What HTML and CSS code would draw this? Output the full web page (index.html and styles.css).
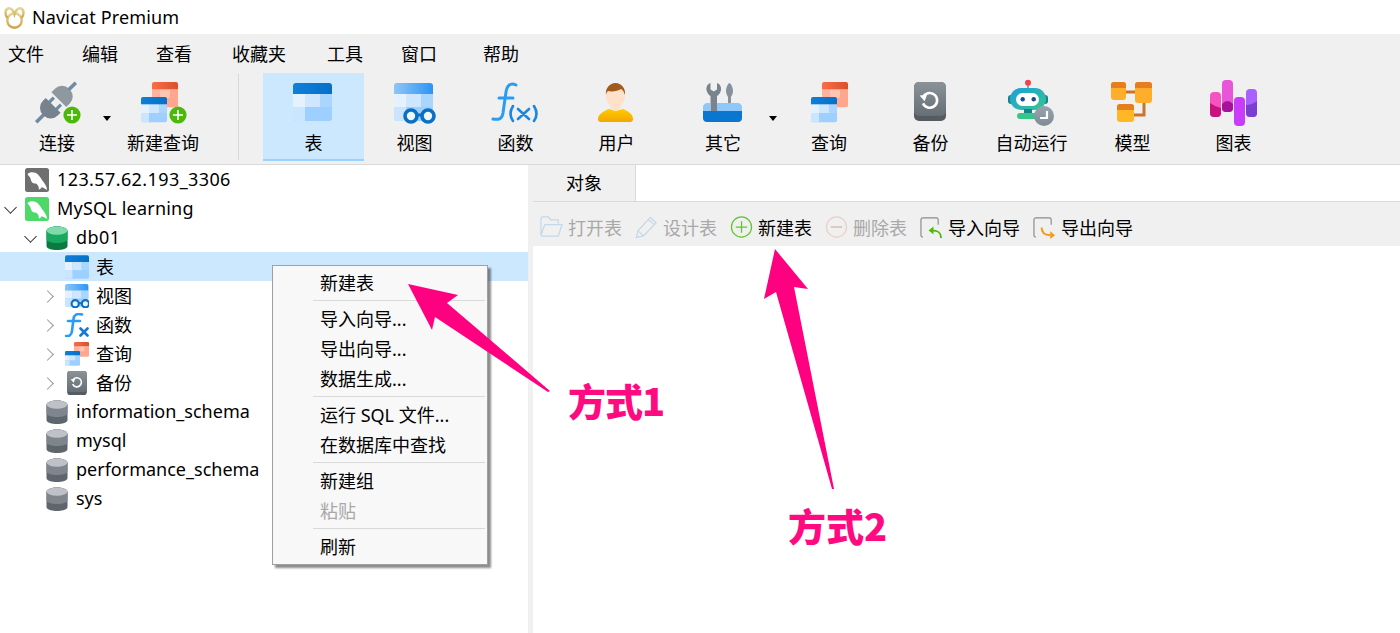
FILE: index.html
```html
<!DOCTYPE html>
<html lang="zh-CN">
<head>
    <meta charset="UTF-8">
    <title>Navicat Premium</title>
    <link rel="stylesheet" href="styles.css">
</head>
<body>

<!-- shared icon parts -->
<svg class="defs" width="0" height="0">
    <defs>
        <linearGradient id="gHead" x1="0" y1="0" x2="1" y2="0"><stop offset="0" stop-color="#0f7fd8"/><stop offset="1" stop-color="#0570c8"/></linearGradient>
        <linearGradient id="gHeadLight" x1="0" y1="0" x2="1" y2="0"><stop offset="0" stop-color="#8ec6f8"/><stop offset="1" stop-color="#2b95f3"/></linearGradient>
        <linearGradient id="gHeadRed" x1="0" y1="0" x2="1" y2="0"><stop offset="0" stop-color="#fb6d48"/><stop offset="1" stop-color="#d9502c"/></linearGradient>
        <linearGradient id="gGrey" x1="0" y1="0" x2="0" y2="1"><stop offset="0" stop-color="#8b9399"/><stop offset="1" stop-color="#666e76"/></linearGradient>
        <linearGradient id="gBody" x1="0" y1="0" x2="0" y2="1"><stop offset="0" stop-color="#ffcb00"/><stop offset="1" stop-color="#f3a600"/></linearGradient>
        <linearGradient id="gRobot" x1="0" y1="0" x2="1" y2="1"><stop offset="0" stop-color="#1c9fdc"/><stop offset="1" stop-color="#36c68c"/></linearGradient>
        <linearGradient id="gBadge" x1="0" y1="0" x2="0" y2="1"><stop offset="0" stop-color="#98a3ad"/><stop offset="1" stop-color="#7f8b97"/></linearGradient>
        <linearGradient id="gLogo" x1="0" y1="0" x2="0" y2="1"><stop offset="0" stop-color="#e6d596"/><stop offset="1" stop-color="#cfa544"/></linearGradient>

        <g id="tblCells">
            <path d="M4 16h39v24a3 3 0 0 1-3 3H7a3 3 0 0 1-3-3z" fill="#9dd0ff"/>
            <rect x="4" y="16" width="12" height="13" fill="#e4f1ff"/>
            <rect x="16" y="16" width="15" height="13" fill="#cfe6ff"/>
            <rect x="31" y="16" width="12" height="13" fill="#a9d6ff"/>
            <path d="M4 29h12v14H7a3 3 0 0 1-3-3z" fill="#cbe5ff"/>
        </g>
        <g id="tbl">
            <use href="#tblCells"/>
            <path d="M4 16V8a3 3 0 0 1 3-3h33a3 3 0 0 1 3 3v8z" fill="url(#gHead)"/>
        </g>
        <g id="tblRed">
            <path d="M4 16h39v24a3 3 0 0 1-3 3H7a3 3 0 0 1-3-3z" fill="#ffa78e"/>
            <rect x="16" y="16" width="15" height="13" fill="#ffc4b2"/>
            <rect x="4" y="16" width="12" height="13" fill="#ffb29c"/>
            <path d="M4 16V8a3 3 0 0 1 3-3h33a3 3 0 0 1 3 3v8z" fill="url(#gHeadRed)"/>
        </g>
        <g id="view">
            <use href="#tblCells"/>
            <path d="M4 16V8a3 3 0 0 1 3-3h33a3 3 0 0 1 3 3v8z" fill="url(#gHeadLight)"/>
            <circle cx="21" cy="38" r="6" fill="#eef6ff" stroke="#0a70c4" stroke-width="3.6"/>
            <circle cx="38" cy="38" r="6" fill="#eef6ff" stroke="#0a70c4" stroke-width="3.6"/>
            <path d="M26 37h7" stroke="#0a70c4" stroke-width="3"/>
        </g>
        <g id="query">
            <use href="#tblRed" transform="translate(14.33 .67) scale(.667)"/>
            <use href="#tbl" transform="translate(3.33 15.67) scale(.667)"/>
        </g>
        <g id="backup">
            <rect x="8" y="4" width="32" height="39" rx="5" fill="#555b60"/>
            <rect x="8" y="4" width="32" height="34" rx="5" fill="url(#gGrey)"/>
            <path d="M17.6 18.2a7.4 7.4 0 1 1-.6 7.2" fill="none" stroke="#fff" stroke-width="2.6"/>
            <path d="M13.6 17.6l7.4-.8-2.4 6.4z" fill="#fff"/>
        </g>
        <g id="plus">
            <circle cx="39" cy="37" r="8.6" fill="#4cb80a"/>
            <path d="M39 32v10M34 37h10" stroke="#fff" stroke-width="1.6"/>
        </g>
        <g id="dolphin">
            <path d="M2.5 6C5 3.500 10 3.500 13 6.500c2.500 2.500 3.500 5 5.500 7.500 2 2.500 3.500 5.500 3.500 8-2-1.500-4-2.500-5.500-2.800-.5 1.300-1.300 2-2.700 2.300.4-2.500-.6-4.500-2.800-6-1.800.4-3.500-.4-4.500-2-.8-1.500-.8-3.500-2-4.800C3.800 7.800 3 7 2.500 6z" fill="#fff"/>
        </g>
        <g id="dbGreen">
            <path d="M0 5c0-6 21-6 21 0v15c0 5.300-21 5.300-21 0z" fill="#0a7a40"/>
            <path d="M0 5c0-6 21-6 21 0v8c0 5.300-21 5.300-21 0z" fill="#18a860"/>
            <ellipse cx="10.5" cy="4.6" rx="10.5" ry="4.200" fill="#7ddcaa"/>
        </g>
        <g id="dbGrey">
            <path d="M0 5c0-6 21-6 21 0v15c0 5.300-21 5.300-21 0z" fill="#5f656c"/>
            <path d="M0 5c0-6 21-6 21 0v8c0 5.300-21 5.300-21 0z" fill="#7e858d"/>
            <ellipse cx="10.5" cy="4.6" rx="10.5" ry="4.200" fill="#bec2c8"/>
        </g>
    </defs>
</svg>

<header class="titlebar">
    <svg class="logo" viewBox="0 0 21 22">
        <g fill="none" stroke="url(#gLogo)" stroke-width="2.4">
            <circle cx="10.5" cy="13.5" r="7.2"/>
            <path d="M3.500 11C.5 7.500 1 2.500 4 1.500c3-1 5.500 2 6.500 5.500 1-3.500 3.500-6.500 6.500-5.500 3 1 3.500 6 .5 9.500"/>
        </g>
    </svg>
    <span class="title-text">Navicat Premium</span>
</header>

<nav class="menubar">
    <span>文件</span><span>编辑</span><span>查看</span><span>收藏夹</span><span>工具</span><span>窗口</span><span>帮助</span>
</nav>

<div class="toolbar">
    <div class="tool tool-drop tool-first">
        <svg viewBox="0 0 48 48">
            <g transform="rotate(-45 23 24.500)">
                <path d="M-5 24.500H6" stroke="#6f8ba3" stroke-width="3.600"/>
                <path d="M5 14h4a10 10 0 0 1 10 10v1a10 10 0 0 1-10 10H5z" transform="matrix(-1 0 0 1 24 0)" fill="#78828c"/>
                <path d="M18 19.500h7M18 29.500h7" stroke="#6f8ba3" stroke-width="3.200"/>
                <path d="M27 14h5a10 10 0 0 1 10 10v1a10 10 0 0 1-10 10h-5z" fill="#8f989f"/>
                <path d="M41 24.500h10" stroke="#6f8ba3" stroke-width="3.600"/>
            </g>
            <use href="#plus"/>
        </svg>
        <span>连接</span>
    </div>
    <div class="caret"><i></i></div>
    <div class="tool tool-wide">
        <svg viewBox="0 0 48 48">
            <use href="#query" transform="translate(-4 0)"/>
            <use href="#plus"/>
        </svg>
        <span>新建查询</span>
    </div>
    <div class="tool-sep"></div>
    <div class="tool active">
        <svg viewBox="0 0 48 48"><use href="#tbl"/></svg>
        <span>表</span>
    </div>
    <div class="tool">
        <svg viewBox="0 0 48 48"><use href="#view"/></svg>
        <span>视图</span>
    </div>
    <div class="tool">
        <svg viewBox="0 0 48 48">
            <g fill="none" stroke="#2b9cf5" stroke-width="3" stroke-linecap="round">
                <path d="M25 7c-6-3-9 1-10 7l-3 21c-1 6-4 7-10 6"/>
                <path d="M8 20h14"/>
            </g>
            <g fill="none" stroke="#1a86e0" stroke-width="2.600" stroke-linecap="round">
                <path d="M22 28q-5 8 0 15M43 28q5 8 0 15M27 31l11 10M38 31L27 41"/>
            </g>
        </svg>
        <span>函数</span>
    </div>
    <div class="tool">
        <svg viewBox="0 0 48 48">
            <path d="M6 41c0-5 6-8 11-10l7 2 7-2c5 2 10 5 10 10 0 2-1 3-3 3H9c-2 0-3-1-3-3z" fill="url(#gBody)"/>
            <path d="M17 26c-3-3-3-7-3-10 0-7 4-11 9.500-11S33 9 33 16c0 3 0 7-3 10-2 5-4 7-6.500 7s-4.500-2-6.500-7z" fill="#ffe0c8"/>
            <path d="M14 17c-1-7 4-12 9.500-12S34 10 33 17c-1-3-2-5-4-6-3 2-9 3-13 2-1 1-2 2-2 4z" fill="#a05a1c"/>
        </svg>
        <span>用户</span>
    </div>
    <div class="tool tool-drop tool-other">
        <svg viewBox="0 0 48 48">
            <path d="M11.500 5c-3 1-4.500 4-4 7 .4 2.500 2 5 4 6v15H18V18c2-1 3.600-3.500 4-6 .5-3-1-6-4-7v6.500l-3.200 2-3.300-2z" fill="#78838d"/>
            <path d="M30.500 5c2 1 3.500 5 3.500 8s-1.500 5-2 6v10h-3V19c-.5-1-2-3-2-6s1.500-7 3.500-8z" fill="#86919b"/>
            <ellipse cx="30.500" cy="30" rx="4.500" ry="3" fill="#78838d"/>
            <path d="M8 25h3.500v8H18v-8h21c2 0 4 2 4 4v4H4v-4c0-2 2-4 4-4z" fill="#8ec8fa"/>
            <path d="M4 33h39v7c0 2.500-1.500 4-4 4H8c-2.500 0-4-1.500-4-4z" fill="#0a76d0"/>
        </svg>
        <span>其它</span>
    </div>
    <div class="caret"><i></i></div>
    <div class="tool tool-wide tool-query">
        <svg viewBox="0 0 48 48"><use href="#query"/></svg>
        <span>查询</span>
    </div>
    <div class="tool">
        <svg viewBox="0 0 48 48"><use href="#backup"/></svg>
        <span>备份</span>
    </div>
    <div class="tool">
        <svg viewBox="0 0 48 48">
            <g transform="translate(1 0)">
                <path d="M20 6v5" stroke="#7d8a96" stroke-width="1.500"/>
                <circle cx="20" cy="4.700" r="3" fill="#f2404e"/>
                <rect x="0" y="17" width="40" height="9" rx="3" fill="#14838f"/>
                <rect x="2" y="10" width="36" height="22" rx="11" fill="url(#gRobot)"/>
                <rect x="8" y="15" width="23" height="13" rx="6.500" fill="#fff"/>
                <circle cx="14.700" cy="21.300" r="2.200" fill="#1d4a8a"/>
                <circle cx="25.700" cy="21.300" r="2.200" fill="#1d4a8a"/>
                <rect x="16" y="31" width="8" height="5" fill="#14838f"/>
                <rect x="9" y="35" width="21" height="6" rx="3" fill="#36c68c"/>
                <circle cx="36" cy="38" r="10" fill="url(#gBadge)"/>
                <path d="M39 33v7h-7" fill="none" stroke="#fff" stroke-width="2.200"/>
            </g>
        </svg>
        <span>自动运行</span>
    </div>
    <div class="tool">
        <svg viewBox="0 0 48 48">
            <path d="M18 14h9M36 25v12H26" fill="none" stroke="#c8752a" stroke-width="3"/>
            <rect x="3" y="4" width="15" height="18" rx="3" fill="#ffae2b"/>
            <path d="M3 10V7a3 3 0 0 1 3-3h9a3 3 0 0 1 3 3v3z" fill="#e67d20"/>
            <rect x="27" y="4" width="17" height="21" rx="3" fill="#ffae2b"/>
            <path d="M27 10V7a3 3 0 0 1 3-3h11a3 3 0 0 1 3 3v3z" fill="#e67d20"/>
            <rect x="9" y="26" width="17" height="18" rx="3" fill="#ffb724"/>
            <path d="M9 32v-3a3 3 0 0 1 3-3h11a3 3 0 0 1 3 3v3z" fill="#e67d20"/>
        </svg>
        <span>模型</span>
    </div>
    <div class="tool">
        <svg viewBox="0 0 48 48">
            <rect x="1" y="14" width="11" height="25" rx="4" fill="#f652c0"/>
            <path d="M1 25q5.500 4 11 5v5a4 4 0 0 1-4 4H5a4 4 0 0 1-4-4z" fill="#c8127e"/>
            <rect x="13" y="2" width="11" height="32" rx="4" fill="#e855d8"/>
            <path d="M13 26q5.500-6 11 0v4a4 4 0 0 1-4 4h-3a4 4 0 0 1-4-4z" fill="#a5129a"/>
            <rect x="25" y="19" width="11" height="29" rx="4" fill="#c83cfa"/>
            <rect x="37" y="11" width="11" height="28" rx="4" fill="#a860ff"/>
            <path d="M37 27q5.500 0 11-4v12a4 4 0 0 1-4 4h-3a4 4 0 0 1-4-4z" fill="#7a3fd0"/>
        </svg>
        <span>图表</span>
    </div>
</div>

<div class="main">
    <div class="tree">
        <div class="row">
            <i class="chev"></i>
            <svg class="ico" viewBox="0 0 24 24"><rect width="24" height="24" rx="2.500" fill="#6f6f6f"/><use href="#dolphin"/></svg>
            <span class="wide-digits">123.57.62.193_3306</span>
        </div>
        <div class="row">
            <i class="chev open"></i>
            <svg class="ico" viewBox="0 0 24 24"><rect width="24" height="24" rx="2.500" fill="#4fd86a"/><use href="#dolphin"/></svg>
            <span class="wide-name">MySQL learning</span>
        </div>
        <div class="row lvl1">
            <i class="chev open"></i>
            <svg class="ico" viewBox="-1.500 0 24 24"><use href="#dbGreen"/></svg>
            <span class="wide-digits">db01</span>
        </div>
        <div class="row lvl2 selected">
            <i class="chev"></i>
            <svg class="ico" viewBox="4 5 39 38"><use href="#tbl"/></svg>
            <span>表</span>
        </div>
        <div class="row lvl2">
            <i class="chev closed"></i>
            <svg class="ico" viewBox="4 5 40 40"><use href="#view"/></svg>
            <span>视图</span>
        </div>
        <div class="row lvl2">
            <i class="chev closed"></i>
            <svg class="ico" viewBox="0 0 24 24">
                <path d="M17 1.500C12 0 9 2 8.500 6L7 18c-.5 4-3 5.500-6 5M3 8h12" fill="none" stroke="#2b9cf5" stroke-width="2.600" stroke-linecap="round"/>
                <path d="M15.500 15.500l7 7M22.500 15.500l-7 7" stroke="#1a78d0" stroke-width="2.600" stroke-linecap="round"/>
            </svg>
            <span>函数</span>
        </div>
        <div class="row lvl2">
            <i class="chev closed"></i>
            <svg class="ico" viewBox="0 0 24 24"><use href="#tblRed" transform="translate(7.46 -1.92) scale(.385)"/><use href="#tbl" transform="translate(-1.54 7.07) scale(.385)"/></svg>
            <span>查询</span>
        </div>
        <div class="row lvl2">
            <i class="chev closed"></i>
            <svg class="ico" viewBox="5 4 38 39"><use href="#backup"/></svg>
            <span>备份</span>
        </div>
        <div class="row lvl1">
            <i class="chev"></i>
            <svg class="ico" viewBox="-1.500 0 24 24"><use href="#dbGrey"/></svg>
            <span>information_schema</span>
        </div>
        <div class="row lvl1">
            <i class="chev"></i>
            <svg class="ico" viewBox="-1.500 0 24 24"><use href="#dbGrey"/></svg>
            <span>mysql</span>
        </div>
        <div class="row lvl1">
            <i class="chev"></i>
            <svg class="ico" viewBox="-1.500 0 24 24"><use href="#dbGrey"/></svg>
            <span>performance_schema</span>
        </div>
        <div class="row lvl1">
            <i class="chev"></i>
            <svg class="ico" viewBox="-1.500 0 24 24"><use href="#dbGrey"/></svg>
            <span>sys</span>
        </div>
    </div>

    <div class="content">
        <div class="tabs"><div class="tab">对象</div></div>
        <div class="actions">
            <div class="action off">
                <svg viewBox="0 0 24 24" fill="none" stroke="#c4d8e8" stroke-width="1.300"><path d="M1 20V3a2 2 0 0 1 2-2h6l2 3h8v4M1 20l4-11h18l-4 12H2z"/></svg>
                <span>打开表</span>
            </div>
            <div class="action off">
                <svg viewBox="0 0 24 24" fill="none" stroke="#c4d8e8" stroke-width="1.300"><path d="M1.500 22.500l1.500-7L16 1.500l6 5.500L9 20.500zM3 15.500l6 5M14 4l6 5"/></svg>
                <span>设计表</span>
            </div>
            <div class="action">
                <svg viewBox="0 0 24 24" fill="none" stroke="#5fc52a" stroke-width="1.300"><circle cx="12" cy="11.500" r="10.500"/><path d="M12 5.500v12M6 11.500h12"/></svg>
                <span>新建表</span>
            </div>
            <div class="action off">
                <svg viewBox="0 0 24 24" fill="none" stroke="#eacfc8" stroke-width="1.300"><circle cx="12" cy="11.500" r="10.500"/><path d="M6 11.500h12" stroke="#d8b0a8"/></svg>
                <span>删除表</span>
            </div>
            <div class="action">
                <svg viewBox="0 0 24 24" fill="none">
                    <path d="M3 22a2 2 0 0 1-2-2V4a2 2 0 0 1 2-2h14a2 2 0 0 1 2 2v5" stroke="#8a8a8a" stroke-width="1.200"/>
                    <path d="M22 23c0-5-2-8-10-8" stroke="#4cb80a" stroke-width="2"/>
                    <path d="M9 15l5-4v8z" fill="#4cb80a"/>
                </svg>
                <span>导入向导</span>
            </div>
            <div class="action">
                <svg viewBox="0 0 24 24" fill="none">
                    <path d="M3 22a2 2 0 0 1-2-2V4a2 2 0 0 1 2-2h14a2 2 0 0 1 2 2v5" stroke="#8a8a8a" stroke-width="1.200"/>
                    <path d="M9 12c0 5 2 8 9 8" stroke="#f59a14" stroke-width="2"/>
                    <path d="M23 20l-5-4v8z" fill="#f59a14"/>
                </svg>
                <span>导出向导</span>
            </div>
        </div>
        <div class="pane"></div>
    </div>
</div>

<!-- right click menu over the tree -->
<ul class="ctx">
    <li>新建表</li>
    <li class="sep"></li>
    <li>导入向导...</li>
    <li>导出向导...</li>
    <li>数据生成...</li>
    <li class="sep"></li>
    <li>运行 SQL 文件...</li>
    <li>在数据库中查找</li>
    <li class="sep"></li>
    <li>新建组</li>
    <li class="off">粘贴</li>
    <li class="sep"></li>
    <li>刷新</li>
</ul>

<!-- hand drawn notes on top of the screenshot -->
<svg class="arrows" viewBox="0 0 1400 633">
    <path d="M408 284L458 295 447 303 550 391 548 392 435 317 432 330z"/>
    <path d="M775 249L808 289 794 287 834 489 832 489 776 292 764 299z"/>
</svg>
<div class="note note-1">方式1</div>
<div class="note note-2">方式2</div>

</body>
</html>
```

FILE: styles.css
```css
* {
    box-sizing: border-box;
}

body {
    margin: 0;
    width: 1400px;
    height: 633px;
    overflow: hidden;
    position: relative;
    background: #fff;
    color: #000;
    font-family: "Noto Sans", "Noto Sans CJK SC", sans-serif;
    font-size: 18px;
}

.defs {
    position: absolute;
}

.titlebar {
    height: 34px;
    display: flex;
    align-items: center;
    padding-left: 4px;
    gap: 7px;
}

.logo {
    width: 21px;
    height: 22px;
    margin-top: 1px;
}

.title-text {
    letter-spacing: 0.15px;
}

.menubar {
    height: 38px;
    background: #f0f0f0;
    padding-left: 8px;
    display: grid;
    grid-template-columns: 74px 74px 76px 95px 74px 82px auto;
    align-items: center;
}

.toolbar {
    height: 93px;
    background: #f0f0f0;
    border-bottom: 1px solid #d9d9d9;
    padding-top: 1px;
    display: flex;
    align-items: flex-start;
}

.tool {
    width: 101px;
    height: 88px;
    padding-top: 5px;
    display: flex;
    flex-direction: column;
    align-items: center;
    flex-shrink: 0;
}

.tool svg {
    width: 48px;
    height: 48px;
    margin-right: 1px;
    flex-shrink: 0;
}

.tool span {
    margin-top: 5px;
    line-height: 24px;
    white-space: nowrap;
}

.tool-drop {
    width: 86px;
}

.tool-first {
    margin-left: 14px;
}

.tool-other {
    margin-left: 13px;
}

.tool-wide {
    width: 98px;
}

.tool-drop svg,
.tool-wide svg {
    margin-right: 0;
}

.tool-query {
    margin-right: 2px;
}

.active {
    background: #cce8ff;
    border-bottom: 2px solid #99d1ff;
}

.caret {
    width: 14px;
    padding-top: 43px;
    display: flex;
    justify-content: center;
}

.caret i {
    border-left: 4px solid transparent;
    border-right: 4px solid transparent;
    border-top: 5px solid #000;
}

.tool-sep {
    width: 1px;
    height: 86px;
    margin: 1px 24px 0 26px;
    background: #d9d9d9;
}

.main {
    height: 468px;
    display: flex;
}

.tree {
    width: 528px;
}

.row {
    height: 29px;
    display: flex;
    align-items: center;
    white-space: nowrap;
}

.row span {
    margin-top: -2px;
}

.wide-digits {
    letter-spacing: 0.4px;
}

.wide-name {
    letter-spacing: 0.2px;
}

.lvl1 {
    padding-left: 20px;
}

.lvl2 {
    padding-left: 40px;
}

.selected {
    background: #cce8ff;
}

.chev {
    width: 20px;
    height: 20px;
    flex-shrink: 0;
    position: relative;
}

.chev.open::after,
.chev.closed::after {
    content: "";
    position: absolute;
    width: 8px;
    height: 8px;
    left: 6px;
    top: 4px;
    border-right: 1.5px solid #333;
    border-bottom: 1.5px solid #333;
    transform: rotate(45deg);
}

.chev.closed::after {
    left: 3px;
    top: 6px;
    border-color: #999;
    transform: rotate(-45deg);
}

.ico {
    width: 24px;
    height: 24px;
    margin: 0 7px 0 5px;
    flex-shrink: 0;
}

.row:not(.lvl1):not(.lvl2) .ico {
    margin-right: 8px;
}

.content {
    flex: 1;
    margin-left: 5px;
    position: relative;
    display: flex;
    flex-direction: column;
}

.content::before {
    content: "";
    position: absolute;
    left: -5px;
    top: 0;
    width: 5px;
    height: 100%;
    background: #f0f0f0;
}

.tabs {
    height: 37px;
    border-bottom: 1px solid #d9d9d9;
    display: flex;
}

.tab {
    width: 103px;
    background: #f0f0f0;
    border-right: 1px solid #d9d9d9;
    text-align: center;
    line-height: 36px;
}

.actions {
    height: 44px;
    background: #f0f0f0;
    padding: 6px 0 0 7px;
    display: flex;
    align-items: center;
    gap: 13px;
}

.action {
    display: flex;
    align-items: center;
    gap: 5px;
}

.action svg {
    width: 23px;
    height: 23px;
}

.off {
    color: #a8a8a8;
}

.pane {
    flex: 1;
}

.ctx {
    position: absolute;
    left: 272px;
    top: 265px;
    width: 216px;
    margin: 0;
    padding: 2px 0;
    list-style: none;
    background: #f8f8f8;
    border: 1px solid #a0a0a0;
    box-shadow: 3px 3px 2px rgba(0, 0, 0, 0.45);
}

.ctx li {
    height: 30px;
    line-height: 30px;
    padding-left: 47px;
}

.ctx .sep {
    height: 1px;
    padding: 0;
    margin: 2px 2px 3px 40px;
    background: #d9d9d9;
}

.arrows {
    position: absolute;
    left: 0;
    top: 0;
    width: 1400px;
    height: 633px;
    fill: #ff0080;
    pointer-events: none;
}

.note {
    position: absolute;
    color: #ff0a80;
    font-family: "Noto Sans CJK SC", sans-serif;
    font-weight: 900;
    font-size: 38px;
    line-height: 46px;
}

.note-1 {
    left: 568px;
    top: 377px;
    letter-spacing: -1px;
}

.note-2 {
    left: 788px;
    top: 502px;
}
```
